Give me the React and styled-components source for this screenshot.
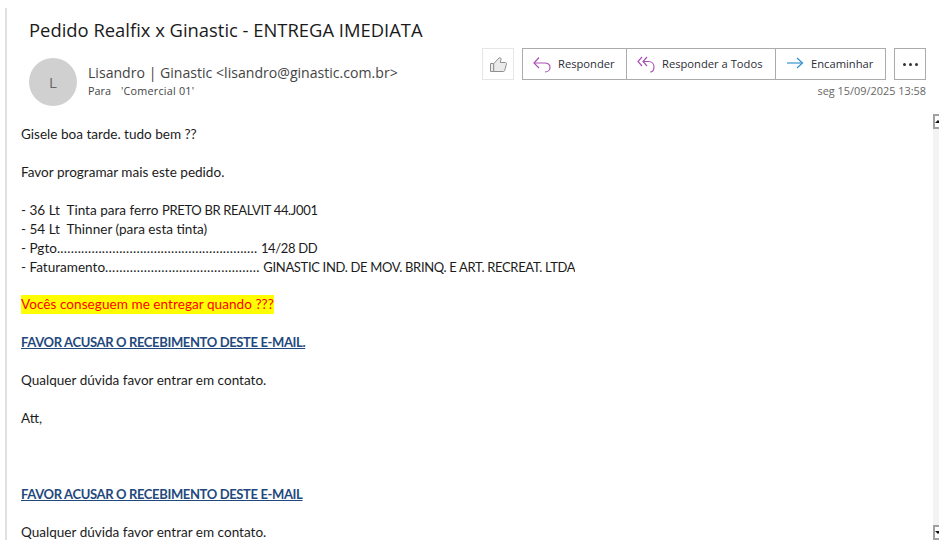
import React from "react";
import styled, { createGlobalStyle } from "styled-components";

const Global = createGlobalStyle`
  html, body { margin: 0; padding: 0; background: #fff; width: 939px; height: 540px; overflow: hidden; }
  #root { height: 540px; }
`;
const Page = styled.div`
  height: 540px; box-sizing: border-box; padding-top: 8px; padding-left: 5px;
  display: flex; flex-direction: column; overflow: hidden; background: #fff;
`;
const Frame = styled.div`
  flex: 1; min-height: 0; border-left: 2px solid #e1e1e1; display: flex; flex-direction: column;
`;
const Header = styled.header`
  height: 103px; flex: none; box-sizing: border-box; padding: 10px 13px 0 22px;
  display: flex; flex-direction: column; font-family: "Open Sans", sans-serif;
`;
const Title = styled.h1`
  margin: 0; font-size: 18.4px; font-weight: 400; line-height: 24px; color: #1a1a1a; white-space: nowrap;
`;
const MetaRow = styled.div`display: flex; justify-content: space-between; margin-top: 6px;`;
const Sender = styled.div`display: flex; align-items: flex-start; margin-top: 10px;`;
const Avatar = styled.div`
  width: 48px; height: 48px; border-radius: 50%; background: #d0d0d0; color: #666;
  display: flex; align-items: center; justify-content: center; font-size: 15px;
`;
const SenderText = styled.div`margin-left: 11px; padding-top: 5px;`;
const From = styled.div`font-size: 14.1px; line-height: 20px; color: #444; white-space: nowrap;`;
const To = styled.div`
  font-size: 10.8px; line-height: 15px; color: #444; white-space: nowrap;
  span + span { margin-left: 10px; letter-spacing: 0.22px; }
`;
const Side = styled.div`display: flex; flex-direction: column; align-items: flex-end;`;
const Actions = styled.div`display: flex; align-items: stretch; height: 32px;`;
const Like = styled.div`
  width: 32px; box-sizing: border-box; border: 1px solid #e6e6e6; margin-right: 8px;
  display: flex; align-items: center; justify-content: center;
`;
const Group = styled.div`display: flex; border: 1px solid #ababab; box-sizing: border-box;`;
const Action = styled.div`
  display: flex; align-items: center; box-sizing: border-box; width: ${p => p.$w}px; padding: 0 0 2px 10px;
  font-size: 11.2px; color: #2d2d35; white-space: nowrap;
  & + & { border-left: 1px solid #ababab; }
  svg { margin: 2px 7px 0 0; flex: none; }
`;
const More = styled.div`
  width: 32px; box-sizing: border-box; border: 1px solid #ababab; margin-left: 8px;
  display: flex; align-items: center; justify-content: center; gap: 3px;
`;
const Dot = styled.i`width: 3px; height: 3px; border-radius: 50%; background: #333; display: block;`;
const Stamp = styled.div`font-size: 10.9px; line-height: 14px; margin-top: 4px; color: #666; white-space: nowrap;`;
const Content = styled.div`flex: 1; min-height: 0; display: flex; justify-content: space-between;`;
const Body = styled.div`
  padding: 14px 0 0 14px; font-family: Lato, sans-serif; font-size: 13.55px; line-height: 19px; color: #1c1c1c;
  overflow: hidden;
`;
const Line = styled.div`height: 18.95px; white-space: pre;`;
const Highlight = styled.span`display: inline-block; height: 19px; background: #ffff00; color: #ff0000; letter-spacing: 0.05px;`;
const Strong = styled.span`color: #1f497d; font-weight: 700; font-size: 13px; text-decoration: underline; letter-spacing: -0.36px;`;
const Caps = styled.span`font-size: 13px; letter-spacing: -0.33px;`;
const Leader = styled.span`letter-spacing: ${p => p.$s}px;`;
const Scrollbar = styled.div`
  width: 6px; flex: none; margin-top: 3px; background: #f3f3f3; display: flex; flex-direction: column; justify-content: space-between;
`;
const ScrollButton = styled.div`
  height: 15px; box-sizing: border-box; background: #fff; border: 2px solid #a0a0a0; border-right: 0; position: relative;
  &::after {
    content: ""; position: absolute; left: 0; top: 4px; width: 0; height: 0;
    border-left: 3px solid transparent; border-right: 3px solid transparent;
    ${p => p.$up ? "border-bottom: 3px solid #111;" : "border-top: 3px solid #111;"}
  }
`;

const Thumb = () => (
  <svg width="17" height="15" viewBox="0 0 17 15" fill="#ebebeb" stroke="#8f8f8f" strokeWidth="1">
    <path d="M.5 6.5h3.2v8H.5z" />
    <path d="M3.7 6.7 9 1c1-.7 2.2-.2 2 1.1L10.3 5.5h5c1 0 1.4 .8 1.1 1.7l-1.7 6.3c-.2.7-.6 1-1.3 1H3.7z" />
  </svg>
);
const Reply = () => (
  <svg width="18" height="18" viewBox="0 0 18 18" fill="none" stroke="#a94fb5" strokeWidth="1.15">
    <path d="M6 2.5 1 8l5 5" />
    <path d="M1 8h10.5c3.4 0 5.5 2 5.5 4.5S14.9 17 12 17" />
  </svg>
);
const ReplyAll = () => (
  <svg width="18" height="18" viewBox="0 0 18 18" fill="none" stroke="#a94fb5" strokeWidth="1.15">
    <path d="M5 2 1 6.5l4 4.5" />
    <path d="M10 2 6 6.5l4 4.5" />
    <path d="M6 6.5h5.5c3.4 0 5.5 2.500 5.500 5.500S15.500 17 13 17" />
  </svg>
);
const Forward = () => (
  <svg width="18" height="18" viewBox="0 0 18 18" fill="none" stroke="#2f8fd0" strokeWidth="1.15">
    <path d="M1 8h15.500" />
    <path d="M11 3l5.500 5-5.500 5" />
  </svg>
);

const lines = [
  "Gisele boa tarde. tudo bem ??",
  "",
  "Favor programar mais este pedido.",
  "",
  <>- 36 Lt  Tinta para ferro <Caps>PRETO BR REALVIT 44.J001</Caps></>,
  "- 54 Lt  Thinner (para esta tinta)",
  <>- Pgto<Leader $s={0.26}>..........................................................</Leader> <Caps>14/28 DD</Caps></>,
  <>- Faturamento<Leader $s={0.32}>............................................</Leader> <Caps>GINASTIC IND. DE MOV. BRINQ. E ART. RECREAT. LTDA</Caps></>,
  "",
  <Highlight>Vocês conseguem me entregar quando ???</Highlight>,
  "",
  <Strong>FAVOR ACUSAR O RECEBIMENTO DESTE E-MAIL.</Strong>,
  "",
  "Qualquer dúvida favor entrar em contato.",
  "",
  "Att,",
  "",
  "",
  "",
  <Strong>FAVOR ACUSAR O RECEBIMENTO DESTE E-MAIL</Strong>,
  "",
  "Qualquer dúvida favor entrar em contato.",
];

export default function App() {
  return (
    <Page>
      <Global />
      <Frame>
        <Header>
          <Title>Pedido Realfix x Ginastic - ENTREGA IMEDIATA</Title>
          <MetaRow>
            <Sender>
              <Avatar>L</Avatar>
              <SenderText>
                <From>Lisandro | Ginastic &lt;lisandro@ginastic.com.br&gt;</From>
                <To><span>Para</span><span>'Comercial 01'</span></To>
              </SenderText>
            </Sender>
            <Side>
              <Actions>
                <Like><Thumb /></Like>
                <Group>
                  <Action $w={103}><Reply />Responder</Action>
                  <Action $w={149}><ReplyAll />Responder a Todos</Action>
                  <Action $w={110}><Forward />Encaminhar</Action>
                </Group>
                <More><Dot /><Dot /><Dot /></More>
              </Actions>
              <Stamp>seg 15/09/2025 13:58</Stamp>
            </Side>
          </MetaRow>
        </Header>
        <Content>
          <Body>
            {lines.map((l, i) => <Line key={i}>{l}</Line>)}
          </Body>
          <Scrollbar>
            <ScrollButton $up />
            <ScrollButton />
          </Scrollbar>
        </Content>
      </Frame>
    </Page>
  );
}
